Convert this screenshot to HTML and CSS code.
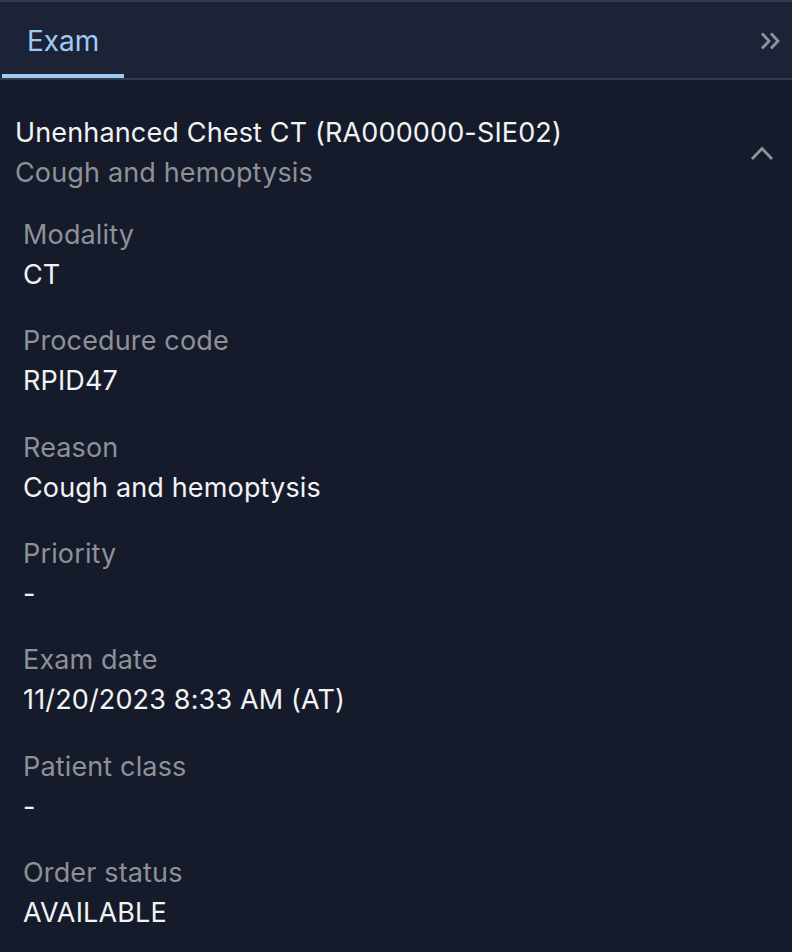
FILE: index.html
```html
<!DOCTYPE html>
<html>
<head>
<meta charset="utf-8">
<link rel="stylesheet" href="styles.css">
</head>
<body>
<div class="panel">
  <div class="header">
    <div class="tab">Exam</div>
    <button class="collapse" aria-label="Collapse">
      <svg width="24" height="20" viewBox="0 0 24 20"><path d="M2 2.5 L9 10 L2 17.5 M11 2.5 L18 10 L11 17.5" fill="none" stroke="#8f939c" stroke-width="2.8"/></svg>
    </button>
  </div>
  <div class="content">
    <div class="summary">
      <div class="summary-text">
        <div class="title">Unenhanced Chest CT (RA000000-SIE02)</div>
        <div class="subtitle">Cough and hemoptysis</div>
      </div>
      <svg class="chev" width="24" height="16" viewBox="0 0 24 16"><path d="M2 14 L12 3.5 L22 14" fill="none" stroke="#8f939c" stroke-width="2.8"/></svg>
    </div>
    <div class="fields">
      <div class="field"><div class="label">Modality</div><div class="value">CT</div></div>
      <div class="field"><div class="label">Procedure code</div><div class="value">RPID47</div></div>
      <div class="field"><div class="label">Reason</div><div class="value">Cough and hemoptysis</div></div>
      <div class="field"><div class="label">Priority</div><div class="value">-</div></div>
      <div class="field"><div class="label">Exam date</div><div class="value">11/20/2023 8:33 AM (AT)</div></div>
      <div class="field"><div class="label">Patient class</div><div class="value">-</div></div>
      <div class="field"><div class="label">Order status</div><div class="value">AVAILABLE</div></div>
    </div>
  </div>
</div>
</body>
</html>
```
FILE: styles.css
```css
html, body {
  margin: 0;
  padding: 0;
  background: #151b2a;
}
body {
  font-family: Inter, "Noto Sans", sans-serif;
  color: #f2f3f5;
  width: 792px;
  height: 952px;
  overflow: hidden;
}
.panel {
  display: flex;
  flex-direction: column;
}
.header {
  display: flex;
  justify-content: space-between;
  align-items: stretch;
  height: 76px;
  background: #1c2336;
  border-top: 2px solid #343b4d;
  border-bottom: 2px solid #343b4d;
  padding-left: 2px;
}
.tab {
  display: flex;
  align-items: center;
  padding: 5px 25px 0;
  font-size: 28px;
  color: #9ecbf5;
  border-bottom: 4px solid #9dcaf5;
  margin-bottom: -2px;
  box-sizing: border-box;
  height: 76px;
}
.collapse {
  background: none;
  border: none;
  padding: 2px 8px 0 0;
  display: flex;
  align-items: center;
  cursor: pointer;
}
.content {
  padding: 33px 18px 0 15px;
  letter-spacing: 0.15px;
}
.summary {
  display: flex;
  justify-content: space-between;
  align-items: center;
}
.title {
  font-size: 27px;
  line-height: 40px;
  color: #f2f3f5;
}
.subtitle {
  font-size: 27px;
  line-height: 40px;
  color: #8e9197;
}
.fields {
  display: flex;
  flex-direction: column;
  gap: 26.35px;
  padding: 22px 0 0 8px;
}
.label {
  font-size: 27px;
  line-height: 40px;
  color: #8e9197;
}
.value {
  font-size: 27px;
  line-height: 40px;
  color: #f2f3f5;
}
```
